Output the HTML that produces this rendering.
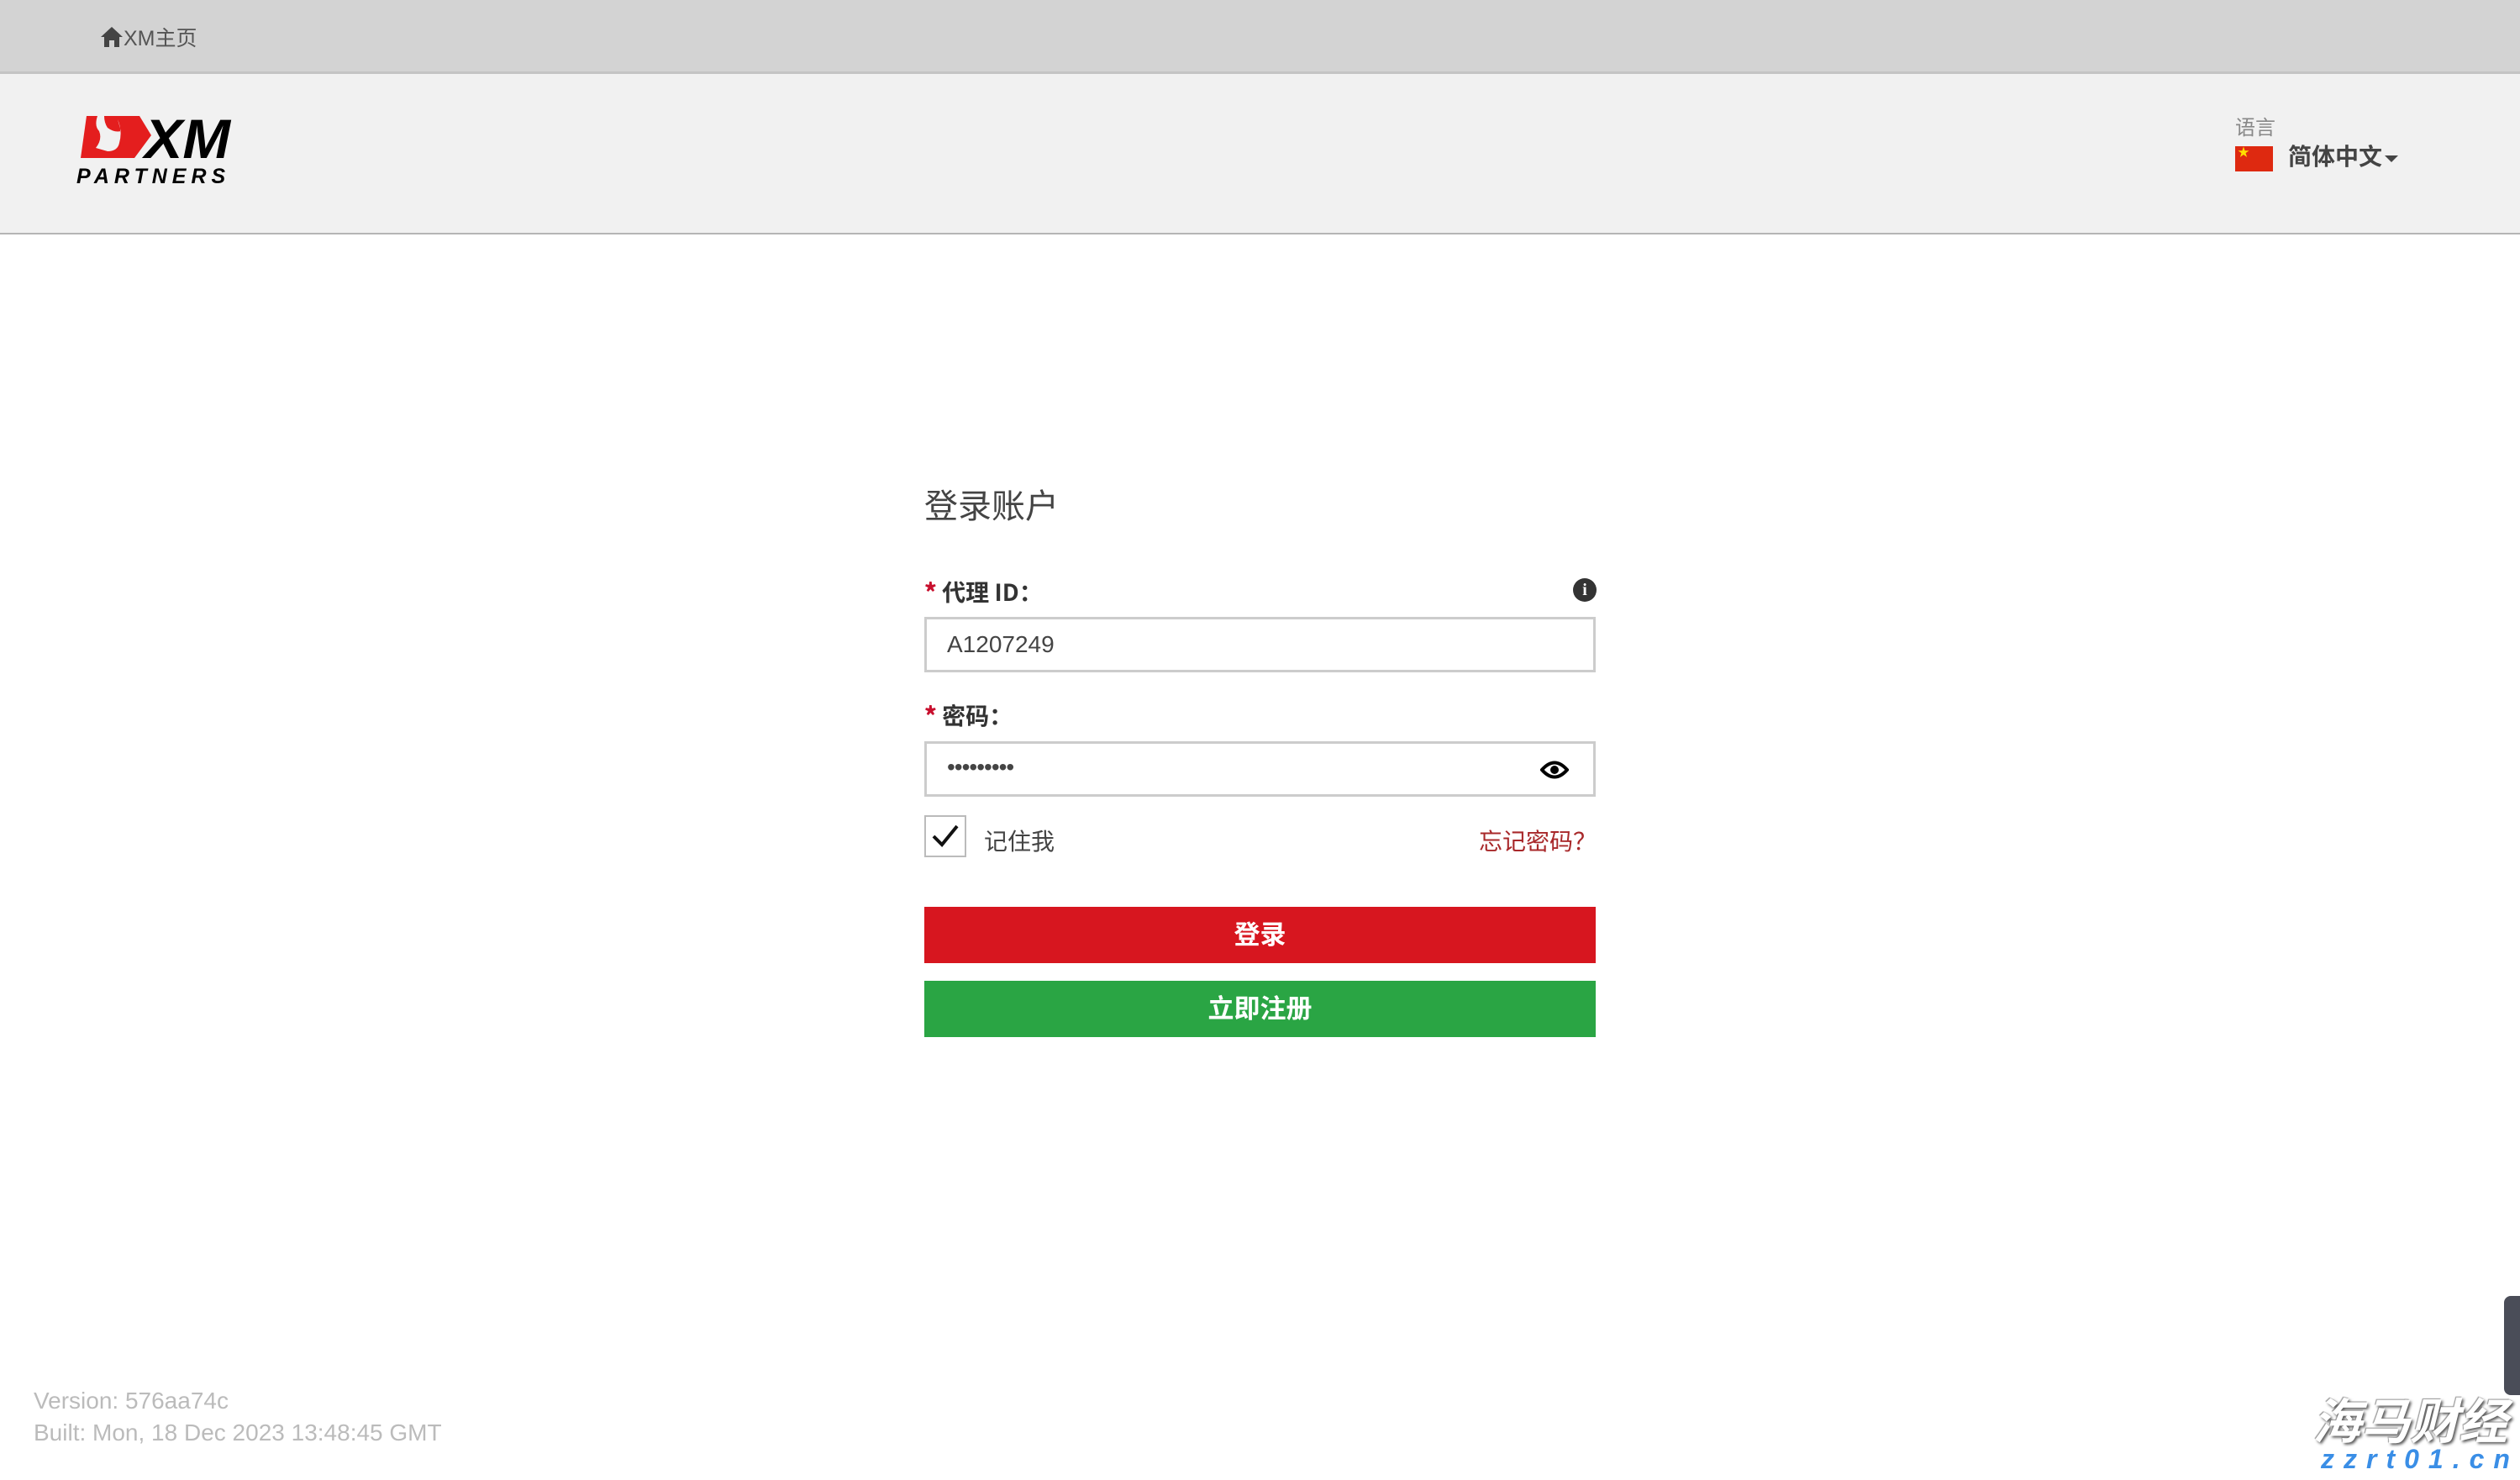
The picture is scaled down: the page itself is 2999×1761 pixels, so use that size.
<!DOCTYPE html>
<html><head><meta charset="utf-8"><style>
*{box-sizing:border-box;margin:0;padding:0}
body{width:2999px;height:1761px;background:#fff;font-family:"Liberation Sans","Noto Sans CJK SC",sans-serif;color:#333;position:relative;overflow:hidden}
.top{position:absolute;left:0;top:0;width:2999px;height:88px;background:#d3d3d3;border-bottom:3px solid #c4c4c4}
.home{position:absolute;left:119px;top:26px;font-size:25px;color:#555;display:flex;align-items:center}
.hdr{position:absolute;left:0;top:88px;width:2999px;height:191px;background:#f1f1f1;border-bottom:2px solid #b5b5b5}
.abs{position:absolute}
.box{position:absolute;left:1100px;width:799px;height:66px;border:3px solid #ccc;background:#fff}
.lbl{position:absolute;left:1100px;font-size:28px;font-weight:bold;color:#333;line-height:40px;font-family:"Noto Sans CJK SC",sans-serif}
.lbl b{color:#c8102e}
.btn{position:absolute;left:1100px;width:799px;height:67px;color:#fff;font-size:31px;font-weight:bold;text-align:center;line-height:67px}
</style></head><body>
<div class="top"><div class="home"><svg width="28" height="26" viewBox="0 0 28 26"><path d="M14 1 L1 13 H5 V25 H11 V17 H17 V25 H23 V13 H27 Z" fill="#444"/></svg>XM主页</div></div>
<div class="hdr">
 <svg class="abs" style="left:88px;top:48px" width="200" height="90" viewBox="0 0 200 90">
  <path d="M15 2 H78 L92 25 L72 52 H8 Z" fill="#e41e1e"/>
  <path d="M28 2 Q24 14 30 20 Q34 30 26 40 L40 44 Q52 44 54 34 Q58 20 52 6 L56 20 Q48 22 40 16 Q36 10 36 2 Z" fill="#f1f1f1"/>
  <text x="84" y="52" font-family="Liberation Sans" font-weight="bold" font-style="italic" font-size="66" fill="#000" textLength="102" lengthAdjust="spacingAndGlyphs">XM</text>
  <text x="3" y="82" font-family="Liberation Sans" font-weight="bold" font-style="italic" font-size="25" fill="#000" letter-spacing="6">PARTNERS</text>
 </svg>
 <div class="abs" style="left:2660px;top:44px;font-size:24px;color:#888">语言</div>
 <div class="abs" style="left:2660px;top:86px;width:45px;height:30px;background:#de2910"><span style="position:absolute;left:3px;top:-3px;color:#ffde00;font-size:14px">★</span></div>
 <div class="abs" style="left:2723px;top:77px;font-size:28px;font-weight:bold;color:#444">简体中文</div>
 <div class="abs" style="left:2838px;top:97px;width:0;height:0;border-left:8px solid transparent;border-right:8px solid transparent;border-top:8px solid #444"></div>
</div>
<div class="abs" style="left:1100px;top:570px;font-size:40px;color:#444">登录账户</div>
<div class="lbl" style="top:684px"><b>*</b> 代理 ID：</div>
<div class="abs" style="left:1872px;top:688px;width:28px;height:28px;border-radius:50%;background:#333;color:#fff;font-size:20px;font-weight:bold;text-align:center;line-height:28px;font-family:'Liberation Serif',serif">i</div>
<div class="box" style="top:734px"><span class="abs" style="left:24px;top:14px;font-size:28px;color:#444">A1207249</span></div>
<div class="lbl" style="top:831px"><b>*</b> 密码：</div>
<div class="box" style="top:882px"><span class="abs" style="left:24px;top:12px;font-size:28px;color:#444;letter-spacing:-1px">•••••••••</span>
 <svg class="abs" style="left:730px;top:18px" width="34" height="26" viewBox="0 0 34 26"><path d="M2 13 Q17 -4 32 13 Q17 30 2 13Z" fill="none" stroke="#000" stroke-width="4"/><circle cx="17" cy="13" r="5" fill="#000"/></svg></div>
<div class="abs" style="left:1100px;top:970px;width:50px;height:50px;border:2px solid #bbb;background:#fff"><svg width="46" height="46" viewBox="0 0 46 46"><path d="M9 23 L19 33 L37 11" fill="none" stroke="#111" stroke-width="4"/></svg></div>
<div class="abs" style="left:1171px;top:980px;font-size:28px;color:#444">记住我</div>
<div class="abs" style="left:1760px;top:980px;font-size:28px;color:#a8282a;font-family:'Noto Sans CJK SC',sans-serif;line-height:40px">忘记密码？</div>
<div class="btn" style="top:1079px;background:#d7161f">登录</div>
<div class="btn" style="top:1167px;background:#2aa544">立即注册</div>
<div class="abs" style="left:40px;top:1648px;font-size:28px;color:#bbb;line-height:38px">Version: 576aa74c<br>Built: Mon, 18 Dec 2023 13:48:45 GMT</div>
<div class="abs" style="left:2980px;top:1542px;width:30px;height:118px;background:#4a4d58;border-radius:8px"></div>
<div class="abs" style="left:2752px;top:1652px;font-size:58px;line-height:70px;font-style:italic;font-weight:bold;color:#fff;text-shadow:2px 2px 3px #555,-1px -1px 1px #999;font-family:'Noto Sans CJK SC',sans-serif">海马财经</div>
<div class="abs" style="left:2762px;top:1718px;font-size:32px;line-height:36px;font-style:italic;font-weight:bold;color:#3a8ee6;letter-spacing:11px">zzrt01.cn</div>
</body></html>
